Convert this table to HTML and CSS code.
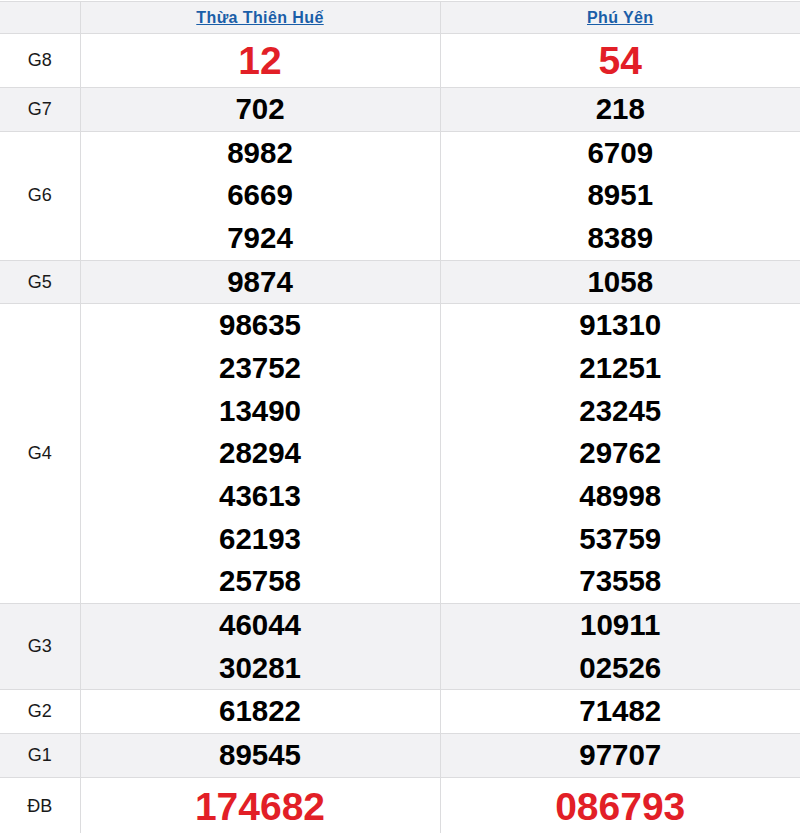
FILE: index.html
```html
<!DOCTYPE html>
<html lang="vi">
<head>
<meta charset="utf-8">
<title>Kết quả xổ số</title>
<link rel="stylesheet" href="styles.css">
</head>
<body>
<table class="kq">
  <colgroup><col class="c-label"><col class="c-prov"><col class="c-prov"></colgroup>
  <thead>
    <tr class="shade head">
      <th></th>
      <th><a href="#">Thừa Thiên Huế</a></th>
      <th><a href="#">Phú Yên</a></th>
    </tr>
  </thead>
  <tbody>
    <tr class="big">
      <td class="lbl">G8</td>
      <td class="num red"><div>12</div></td>
      <td class="num red"><div>54</div></td>
    </tr>
    <tr class="shade">
      <td class="lbl">G7</td>
      <td class="num"><div>702</div></td>
      <td class="num"><div>218</div></td>
    </tr>
    <tr>
      <td class="lbl">G6</td>
      <td class="num"><div>8982</div><div>6669</div><div>7924</div></td>
      <td class="num"><div>6709</div><div>8951</div><div>8389</div></td>
    </tr>
    <tr class="shade">
      <td class="lbl">G5</td>
      <td class="num"><div>9874</div></td>
      <td class="num"><div>1058</div></td>
    </tr>
    <tr>
      <td class="lbl">G4</td>
      <td class="num"><div>98635</div><div>23752</div><div>13490</div><div>28294</div><div>43613</div><div>62193</div><div>25758</div></td>
      <td class="num"><div>91310</div><div>21251</div><div>23245</div><div>29762</div><div>48998</div><div>53759</div><div>73558</div></td>
    </tr>
    <tr class="shade">
      <td class="lbl">G3</td>
      <td class="num"><div>46044</div><div>30281</div></td>
      <td class="num"><div>10911</div><div>02526</div></td>
    </tr>
    <tr>
      <td class="lbl">G2</td>
      <td class="num"><div>61822</div></td>
      <td class="num"><div>71482</div></td>
    </tr>
    <tr class="shade">
      <td class="lbl">G1</td>
      <td class="num"><div>89545</div></td>
      <td class="num"><div>97707</div></td>
    </tr>
    <tr class="big last">
      <td class="lbl">ĐB</td>
      <td class="num red"><div>174682</div></td>
      <td class="num red"><div>086793</div></td>
    </tr>
  </tbody>
</table>
</body>
</html>
```
FILE: styles.css
```css
html, body {
  margin: 0;
  padding: 0;
  background: #ffffff;
}
body {
  font-family: "Liberation Sans", Arial, sans-serif;
  color: #000;
}
.kq {
  border-collapse: collapse;
  width: 800px;
  margin-top: 1px;
  table-layout: fixed;
}
.c-label { width: 80px; }
.c-prov { width: 360px; }
.kq th, .kq td {
  border: 1px solid #dcdcde;
  padding: 0;
  text-align: center;
  vertical-align: middle;
}
.kq tr > :first-child { border-left: none; }
.kq tr > :last-child { border-right: none; }
.head th {
  height: 31px;
  font-size: 16px;
  font-weight: bold;
  letter-spacing: 0.4px;
}
.head a {
  color: #1a5ea8;
  text-decoration: underline;
}
.shade td, .shade th {
  background: #f2f2f4;
}
.kq td.lbl {
  font-size: 18px;
  color: #1a1a1a;
}
.num div {
  font-size: 29.5px;
  font-weight: bold;
  line-height: 42.67px;
}
.big .num div {
  font-size: 39px;
  line-height: 53px;
}
.last .num div {
  line-height: 57px;
}
.num.red div {
  color: #e21f27;
}
```
